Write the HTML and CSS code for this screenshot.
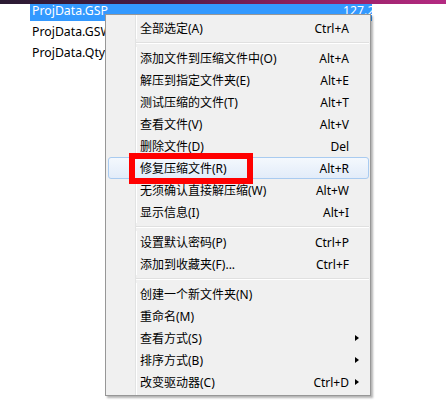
FILE: index.html
```html
<!DOCTYPE html>
<html lang="zh-CN">
<head>
    <meta charset="UTF-8">
    <title>ProjData 右键菜单</title>
    <link rel="stylesheet" href="styles.css">
</head>
<body>
    <div class="title-strip"></div>

    <div class="file-list">
        <div class="file-row selected">
            <span class="file-name">ProjData.GSP</span>
            <span class="file-size">127.2</span>
        </div>
        <div class="file-row">
            <span class="file-name">ProjData.GSW</span>
        </div>
        <div class="file-row">
            <span class="file-name">ProjData.Qty</span>
        </div>
    </div>

    <div class="context-menu">
        <div class="menu-item"><span class="label">全部选定(A)</span><span class="key">Ctrl+A</span><span class="sub"></span></div>
        <div class="menu-sep"></div>
        <div class="menu-item"><span class="label">添加文件到压缩文件中(O)</span><span class="key">Alt+A</span><span class="sub"></span></div>
        <div class="menu-item"><span class="label">解压到指定文件夹(E)</span><span class="key">Alt+E</span><span class="sub"></span></div>
        <div class="menu-item"><span class="label">测试压缩的文件(T)</span><span class="key">Alt+T</span><span class="sub"></span></div>
        <div class="menu-item"><span class="label">查看文件(V)</span><span class="key">Alt+V</span><span class="sub"></span></div>
        <div class="menu-item"><span class="label">删除文件(D)</span><span class="key">Del</span><span class="sub"></span></div>
        <div class="menu-item hot"><span class="label">修复压缩文件(R)</span><span class="key">Alt+R</span><span class="sub"></span></div>
        <div class="menu-item"><span class="label">无须确认直接解压缩(W)</span><span class="key">Alt+W</span><span class="sub"></span></div>
        <div class="menu-item"><span class="label">显示信息(I)</span><span class="key">Alt+I</span><span class="sub"></span></div>
        <div class="menu-sep"></div>
        <div class="menu-item"><span class="label">设置默认密码(P)</span><span class="key">Ctrl+P</span><span class="sub"></span></div>
        <div class="menu-item"><span class="label">添加到收藏夹(F)...</span><span class="key">Ctrl+F</span><span class="sub"></span></div>
        <div class="menu-sep"></div>
        <div class="menu-item"><span class="label">创建一个新文件夹(N)</span><span class="key"></span><span class="sub"></span></div>
        <div class="menu-item"><span class="label">重命名(M)</span><span class="key"></span><span class="sub"></span></div>
        <div class="menu-item"><span class="label">查看方式(S)</span><span class="key"></span><span class="sub"><i class="arrow"></i></span></div>
        <div class="menu-item"><span class="label">排序方式(B)</span><span class="key"></span><span class="sub"><i class="arrow"></i></span></div>
        <div class="menu-item"><span class="label">改变驱动器(C)</span><span class="key">Ctrl+D</span><span class="sub"><i class="arrow"></i></span></div>
    </div>

    <!-- red highlight drawn on the screenshot -->
    <div class="mark-box"></div>
</body>
</html>
```

FILE: styles.css
```css
* {
    margin: 0;
    padding: 0;
    box-sizing: border-box;
}

body {
    background-color: #fff;
    font-family: 'Noto Sans', 'Noto Sans CJK SC', sans-serif;
    font-size: 12px;
    color: #000;
    width: 446px;
    height: 408px;
    overflow: hidden;
    position: relative;
}

.title-strip {
    position: absolute;
    top: 0;
    left: 0;
    width: 100%;
    height: 4px;
    background: linear-gradient(to right, #2a1a33, #4a1c45 35%, #8c1f5c 65%, #b42a82 100%);
    z-index: 2;
}

.file-list {
    margin-left: 30px;
    width: 342px;
}

.file-row {
    display: flex;
    height: 21px;
    line-height: 21px;
    padding-left: 2px;
    white-space: nowrap;
    font-size: 12.3px;
}

.file-row.selected {
    background-color: #3399ff;
    color: #fff;
}

.file-name {
    flex: 1;
}

.file-size {
    width: 29px;
    overflow: hidden;
}

.context-menu {
    position: absolute;
    top: 14px;
    left: 105px;
    width: 266px;
    padding: 2px 1px 2px 2px;
    border: 1px solid #979797;
    background: linear-gradient(to right, #f0f0f0 29px, #e2e3e3 29px, #e2e3e3 30px, #fff 30px, #fff 31px, #f0f0f0 31px);
    box-shadow: 2px 2px 2px rgba(0, 0, 0, 0.3);
    z-index: 3;
}

.menu-item {
    display: flex;
    align-items: center;
    height: 22px;
    padding-left: 32px;
    border: 1px solid transparent;
    border-radius: 3px;
    white-space: nowrap;
}

.menu-item.hot {
    border-color: #a9cbf0;
    background: linear-gradient(#f4f8fd, #e2ecf9);
}

.menu-item .label {
    flex: 1;
    margin-left: -1px;
}

.menu-item .key {
    text-align: right;
}

.menu-item .sub {
    width: 19px;
    display: flex;
    align-items: center;
    padding-left: 6px;
}

.arrow {
    display: block;
    width: 0;
    height: 0;
    border-left: 4px solid #000;
    border-top: 3.5px solid transparent;
    border-bottom: 3.5px solid transparent;
}

.menu-sep {
    height: 8px;
    margin-left: 28px;
    background: linear-gradient(#f0f0f0 3px, #e0e0e0 3px, #e0e0e0 4px, #fff 4px, #fff 5px, #f0f0f0 5px);
}

.mark-box {
    position: absolute;
    top: 153px;
    left: 129px;
    width: 124px;
    height: 31px;
    border: 6px solid #f00;
    z-index: 4;
}
```
